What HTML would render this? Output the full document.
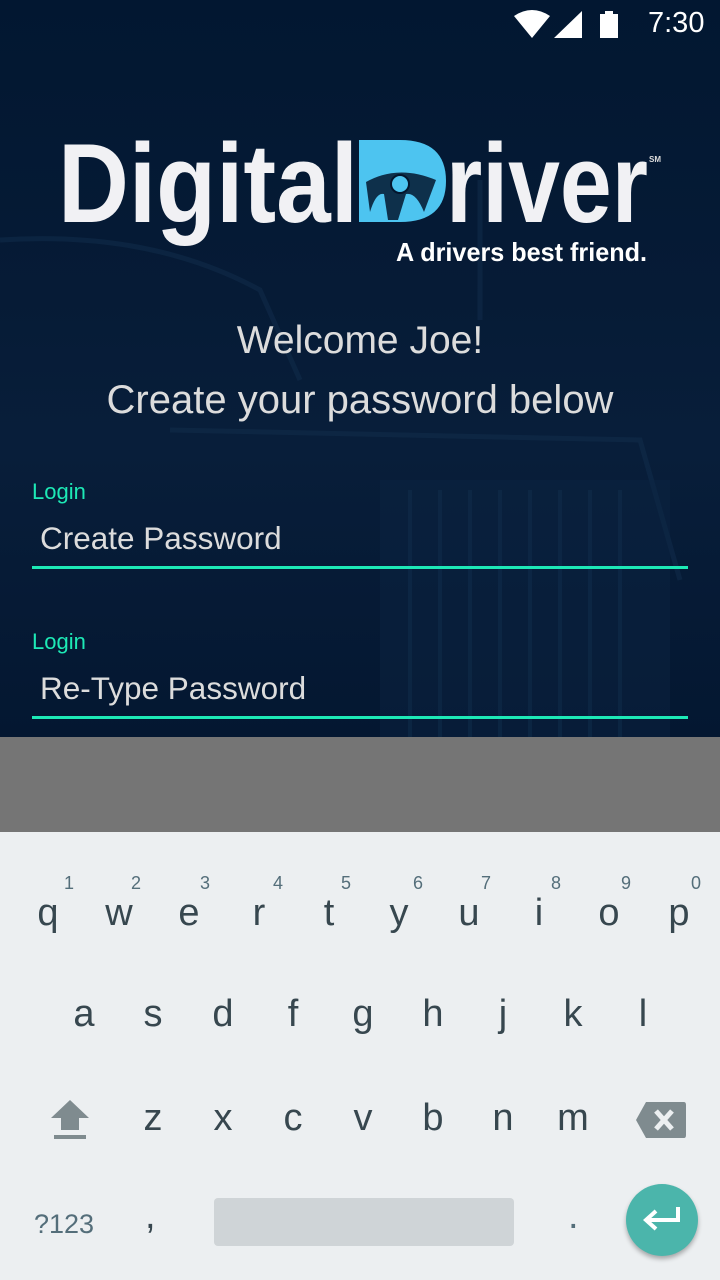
<!DOCTYPE html>
<html><head><meta charset="utf-8"><style>
*{margin:0;padding:0;box-sizing:border-box}
body{width:720px;height:1280px;overflow:hidden;background:#03162e;font-family:"Liberation Sans",sans-serif;position:relative}
.a{position:absolute}
.t{position:absolute;white-space:nowrap}
.k{position:absolute;font-size:38px;color:#37474f;transform:translateX(-50%);text-align:center}
.n{position:absolute;font-size:18px;color:#546e7a;transform:translateX(-50%)}
</style></head><body>
<div class="a" style="left:0;top:0;width:720px;height:737px;background:linear-gradient(180deg,#021731 0%,#061b36 40%,#081e3a 60%,#041731 100%)"></div>
<svg class="a" style="left:0;top:180px" width="720" height="557">
<g fill="none" stroke="#14304f" stroke-width="5" opacity=".45">
<path d="M0 60 Q150 50 260 110 L300 200"/>
<path d="M170 250 L640 260 L680 400"/>
<path d="M480 0 V140"/>
</g>
<rect x="380" y="300" width="290" height="257" fill="#0c2544" opacity=".4"/>
<g stroke="#12304f" stroke-width="4" opacity=".45"><path d="M410 310V557M440 310V557M470 310V557M500 310V557M530 310V557M560 310V557M590 310V557M620 310V557"/></g>
</svg>
<svg class="a" style="left:514px;top:10px" width="110" height="30">
<path d="M0 6 Q18 -6 36 6 L18 28 Z" fill="#fff"/>
<path d="M40 28 L68 1 V28 Z" fill="#fff"/>
<rect x="86" y="4" width="18" height="24" fill="#fff"/><rect x="91" y="1" width="8" height="4" fill="#fff"/>
</svg>
<div class="t" style="left:648px;top:7px;font-size:29px;color:#fff">7:30</div>
<svg class="a" style="left:0;top:120px" width="720" height="160">
<text x="58" y="102" font-family="Liberation Sans" font-weight="bold" font-size="112" fill="#f1f1f4" textLength="300" lengthAdjust="spacingAndGlyphs">Digital</text>
<path d="M359 20 H400 Q446 20 446 61 Q446 102 400 102 H359 Z" fill="#4dc4f0"/>
<path d="M366 62 Q398 44 436 60 L424 92 Q416 72 406 74 L398 100 H388 L384 74 Q376 72 370 92 Z" fill="#03162e" opacity=".85"/>
<circle cx="400" cy="64" r="9" fill="#4dc4f0" stroke="#03162e" stroke-width="2"/>
<text x="446" y="102" font-family="Liberation Sans" font-weight="bold" font-size="112" fill="#f1f1f4" textLength="202" lengthAdjust="spacingAndGlyphs">river</text>
<text x="649" y="42" font-size="8" fill="#ddd" font-weight="bold">SM</text>
<text x="396" y="141" font-family="Liberation Sans" font-weight="bold" font-size="26" fill="#fff" textLength="251" lengthAdjust="spacingAndGlyphs">A drivers best friend.</text>
</svg>
<div class="t" style="left:0;width:720px;text-align:center;top:319px;font-size:39px;color:#dcdcdc">Welcome Joe!</div>
<div class="t" style="left:0;width:720px;text-align:center;top:378px;font-size:40px;color:#dcdcdc">Create your password below</div>
<div class="t" style="left:32px;top:479px;font-size:22px;color:#1de9b6">Login</div>
<div class="t" style="left:40px;top:520px;font-size:31.5px;color:#dcdcdc">Create Password</div>
<div class="a" style="left:32px;top:566px;width:656px;height:3px;background:#1de9b6"></div>
<div class="t" style="left:32px;top:629px;font-size:22px;color:#1de9b6">Login</div>
<div class="t" style="left:40px;top:670px;font-size:31.5px;color:#dcdcdc">Re-Type Password</div>
<div class="a" style="left:32px;top:716px;width:656px;height:3px;background:#1de9b6"></div>
<div class="a" style="left:0;top:737px;width:720px;height:95px;background:#757575"></div>
<div class="a" style="left:0;top:832px;width:720px;height:448px;background:#eceff1"></div>
<div class="n" style="left:69px;top:873px">1</div><div class="k" style="left:48px;top:892px">q</div>
<div class="n" style="left:136px;top:873px">2</div><div class="k" style="left:119px;top:892px">w</div>
<div class="n" style="left:205px;top:873px">3</div><div class="k" style="left:189px;top:892px">e</div>
<div class="n" style="left:278px;top:873px">4</div><div class="k" style="left:259px;top:892px">r</div>
<div class="n" style="left:346px;top:873px">5</div><div class="k" style="left:329px;top:892px">t</div>
<div class="n" style="left:418px;top:873px">6</div><div class="k" style="left:399px;top:892px">y</div>
<div class="n" style="left:486px;top:873px">7</div><div class="k" style="left:469px;top:892px">u</div>
<div class="n" style="left:556px;top:873px">8</div><div class="k" style="left:539px;top:892px">i</div>
<div class="n" style="left:626px;top:873px">9</div><div class="k" style="left:609px;top:892px">o</div>
<div class="n" style="left:696px;top:873px">0</div><div class="k" style="left:679px;top:892px">p</div>
<div class="k" style="left:84px;top:993px">a</div><div class="k" style="left:153px;top:993px">s</div><div class="k" style="left:223px;top:993px">d</div><div class="k" style="left:293px;top:993px">f</div><div class="k" style="left:363px;top:993px">g</div><div class="k" style="left:433px;top:993px">h</div><div class="k" style="left:503px;top:993px">j</div><div class="k" style="left:573px;top:993px">k</div><div class="k" style="left:643px;top:993px">l</div>
<svg class="a" style="left:50px;top:1100px" width="40" height="42"><path d="M20 0 L39 18 H29 V30 H11 V18 H1 Z" fill="#7f8b8f"/><rect x="4" y="35" width="32" height="4" fill="#7f8b8f"/></svg>
<div class="k" style="left:153px;top:1097px">z</div><div class="k" style="left:223px;top:1097px">x</div><div class="k" style="left:293px;top:1097px">c</div><div class="k" style="left:363px;top:1097px">v</div><div class="k" style="left:433px;top:1097px">b</div><div class="k" style="left:503px;top:1097px">n</div><div class="k" style="left:573px;top:1097px">m</div>
<svg class="a" style="left:636px;top:1102px" width="50" height="36"><path d="M10 0 H48 Q50 0 50 3 V33 Q50 36 48 36 H10 L0 18 Z" fill="#7f8b8f"/><path d="M20 9 L36 27 M36 9 L20 27" stroke="#eceff1" stroke-width="5"/></svg>
<div class="t" style="left:34px;top:1209px;font-size:27px;color:#546e7a">?123</div>
<div class="t" style="left:145px;top:1195px;font-size:38px;color:#37474f">,</div>
<div class="a" style="left:214px;top:1198px;width:300px;height:48px;background:#cfd4d7;border-radius:4px"></div>
<div class="t" style="left:568px;top:1195px;font-size:38px;color:#546e7a">.</div>
<div class="a" style="left:626px;top:1184px;width:72px;height:72px;border-radius:50%;background:#4bb5ab;box-shadow:0 3px 5px rgba(0,0,0,.3)"></div>
<svg class="a" style="left:640px;top:1205px" width="44" height="30"><path d="M38 2 V15 H8 M16 6 L6 15 L16 24" fill="none" stroke="#fff" stroke-width="4"/></svg>
</body></html>
